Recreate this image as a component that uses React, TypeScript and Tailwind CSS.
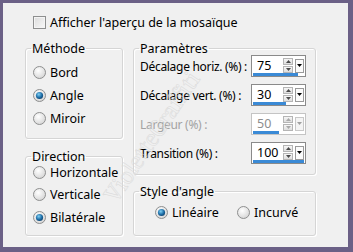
import React from "react";

const font = { fontFamily: '"Noto Sans", "Open Sans", sans-serif' };

function Radio({ checked }: { checked?: boolean }) {
  return (
    <svg width="13" height="13" viewBox="0 0 13 13" className="shrink-0">
      <defs>
        <radialGradient id="rbg" cx="0.4" cy="0.35" r="0.7">
          <stop offset="0" stopColor="#ffffff" />
          <stop offset="1" stopColor="#d4d4d4" />
        </radialGradient>
        <radialGradient id="rdot" cx="0.4" cy="0.35" r="0.7">
          <stop offset="0" stopColor="#7fd0f4" />
          <stop offset="0.6" stopColor="#1f6fa8" />
          <stop offset="1" stopColor="#0d3f6a" />
        </radialGradient>
      </defs>
      <circle cx="6.5" cy="6.5" r="6" fill="url(#rbg)" stroke="#8e8f8f" />
      {checked && <circle cx="6.5" cy="6.5" r="3.6" fill="url(#rdot)" />}
    </svg>
  );
}

function RadioRow({ label, checked, h = "h-[23px]" }: { label: string; checked?: boolean; h?: string }) {
  return (
    <div className={`flex ${h} items-center gap-[4px]`}>
      <Radio checked={checked} />
      <span className="whitespace-nowrap text-[12.5px] leading-[15px] text-black">{label}</span>
    </div>
  );
}

function Group({
  title,
  className,
  children,
}: {
  title: string;
  className?: string;
  children: React.ReactNode;
}) {
  return (
    <fieldset
      className={`rounded-[3px] border border-[#d5d5d5] shadow-[inset_1px_1px_0_#ffffff,1px_1px_0_#ffffff] ${className ?? ""}`}
    >
      <legend className="ml-[5px] whitespace-nowrap px-[1px] text-[12.5px] leading-[15px] text-black">{title}</legend>
      {children}
    </fieldset>
  );
}

function Spin({ value, pct, disabled }: { value: string; pct: number; disabled?: boolean }) {
  const arrow = disabled ? "#a9a9a9" : "#4a4a4a";
  return (
    <div
      className={`flex h-[22px] w-[55px] shrink-0 flex-col border bg-white ${
        disabled ? "border-[#c4c4c4]" : "border-[#8a8a8a]"
      }`}
    >
      <div className="flex h-[17px] items-center">
        <span
          className={`flex-1 pl-[5px] pt-[2px] text-[12.5px] leading-[15px] ${
            disabled ? "text-[#8d8d8d]" : "text-black"
          }`}
        >
          {value}
        </span>
        <div className="mt-[2px] flex w-[10px] flex-col gap-[1px]">
          <div className="flex h-[7px] items-center justify-center border border-[#b5b5b5] bg-gradient-to-b from-[#f6f6f6] to-[#dedede]">
            <svg width="5" height="3" viewBox="0 0 5 3">
              <path d="M0 3 L2.5 0 L5 3 Z" fill={arrow} />
            </svg>
          </div>
          <div className="flex h-[7px] items-center justify-center border border-[#b5b5b5] bg-gradient-to-b from-[#f6f6f6] to-[#dedede]">
            <svg width="5" height="3" viewBox="0 0 5 3">
              <path d="M0 0 L2.5 3 L5 0 Z" fill={arrow} />
            </svg>
          </div>
        </div>
        <div
          className={`ml-[2px] mr-[1px] mt-[2px] flex h-[14px] w-[9px] items-center justify-center border ${
            disabled ? "border-[#c8c8c8] bg-[#f4f4f4]" : "border-[#9a9a9a] bg-[#fbfbfb]"
          }`}
        >
          <svg width="5" height="3" viewBox="0 0 5 3">
            <path d="M0 0 L2.5 3 L5 0 Z" fill={disabled ? "#a0a0a0" : "#000"} />
          </svg>
        </div>
      </div>
      <div className="mb-[1px] mt-auto px-[1px]">
        <div className="h-[3px] bg-[#3a8ad6]" style={{ width: `${pct}%` }} />
      </div>
    </div>
  );
}

function ParamRow({
  label,
  value,
  pct,
  disabled,
}: {
  label: string;
  value: string;
  pct: number;
  disabled?: boolean;
}) {
  return (
    <div className="flex h-[22px] items-center">
      <span
        className={`w-[117px] shrink-0 whitespace-nowrap pl-[6px] text-[12px] leading-[15px] tracking-[-0.3px] ${
          disabled ? "text-[#a3a3a3]" : "text-black"
        }`}
      >
        {label}
      </span>
      <Spin value={value} pct={pct} disabled={disabled} />
    </div>
  );
}

export default function App() {
  return (
    <div className="h-[252px] w-[353px] bg-[#6b6086] pb-[5px] pl-[3px] pr-[5px] pt-[3px]" style={font}>
      <div className="relative flex h-full w-full flex-col overflow-hidden bg-[#f0f0f0]">
        <div className="ml-[30px] mt-[12px] flex items-center gap-[4px]">
          <div className="h-[13px] w-[13px] border border-[#8e8f8f] bg-gradient-to-br from-[#dcdcdc] to-[#f8f8f8] shadow-[inset_0_0_0_1px_#f4f4f4]" />
          <span className="text-[12.5px] leading-[15px] text-black">Afficher l'aperçu de la mosaïque</span>
        </div>

        <div className="ml-[22px] mt-[11px] flex gap-[10px]">
          <div className="flex w-[98px] flex-col gap-[10px]">
            <Group title="Méthode" className="h-[98px]">
              <div className="pl-[7px] pt-[5px]">
                <RadioRow label="Bord" />
                <RadioRow label="Angle" checked />
                <RadioRow label="Miroir" />
              </div>
            </Group>
            <Group title="Direction" className="h-[87px]">
              <div className="-mt-[3px] pl-[7px]">
                <RadioRow label="Horizontale" h="h-[22.5px]" />
                <RadioRow label="Verticale" h="h-[22.5px]" />
                <RadioRow label="Bilatérale" checked h="h-[22.5px]" />
              </div>
            </Group>
          </div>

          <div className="flex w-[183px] flex-col gap-[9px]">
            <Group title="Paramètres" className="h-[134px]">
              <div className="-mt-[1px] flex flex-col gap-[7px]">
                <ParamRow label="Décalage horiz. (%) :" value="75" pct={87.5} />
                <ParamRow label="Décalage vert. (%) :" value="30" pct={65} />
                <ParamRow label="Largeur (%) :" value="50" pct={50} disabled />
                <ParamRow label="Transition (%) :" value="100" pct={100} />
              </div>
            </Group>
            <Group title="Style d'angle" className="h-[52px]">
              <div className="flex pl-[21px] pt-[2px]">
                <div className="w-[82px]">
                  <RadioRow label="Linéaire" checked />
                </div>
                <RadioRow label="Incurvé" />
              </div>
            </Group>
          </div>
        </div>

        <div className="pointer-events-none absolute left-[54px] top-[119px] h-[30px] w-[190px] -rotate-[56deg] whitespace-nowrap text-center font-serif text-[25px] leading-[30px] text-transparent [-webkit-text-stroke:0.5px_#d9d9d9]">
          VioletteGraffiti
        </div>
      </div>
    </div>
  );
}
